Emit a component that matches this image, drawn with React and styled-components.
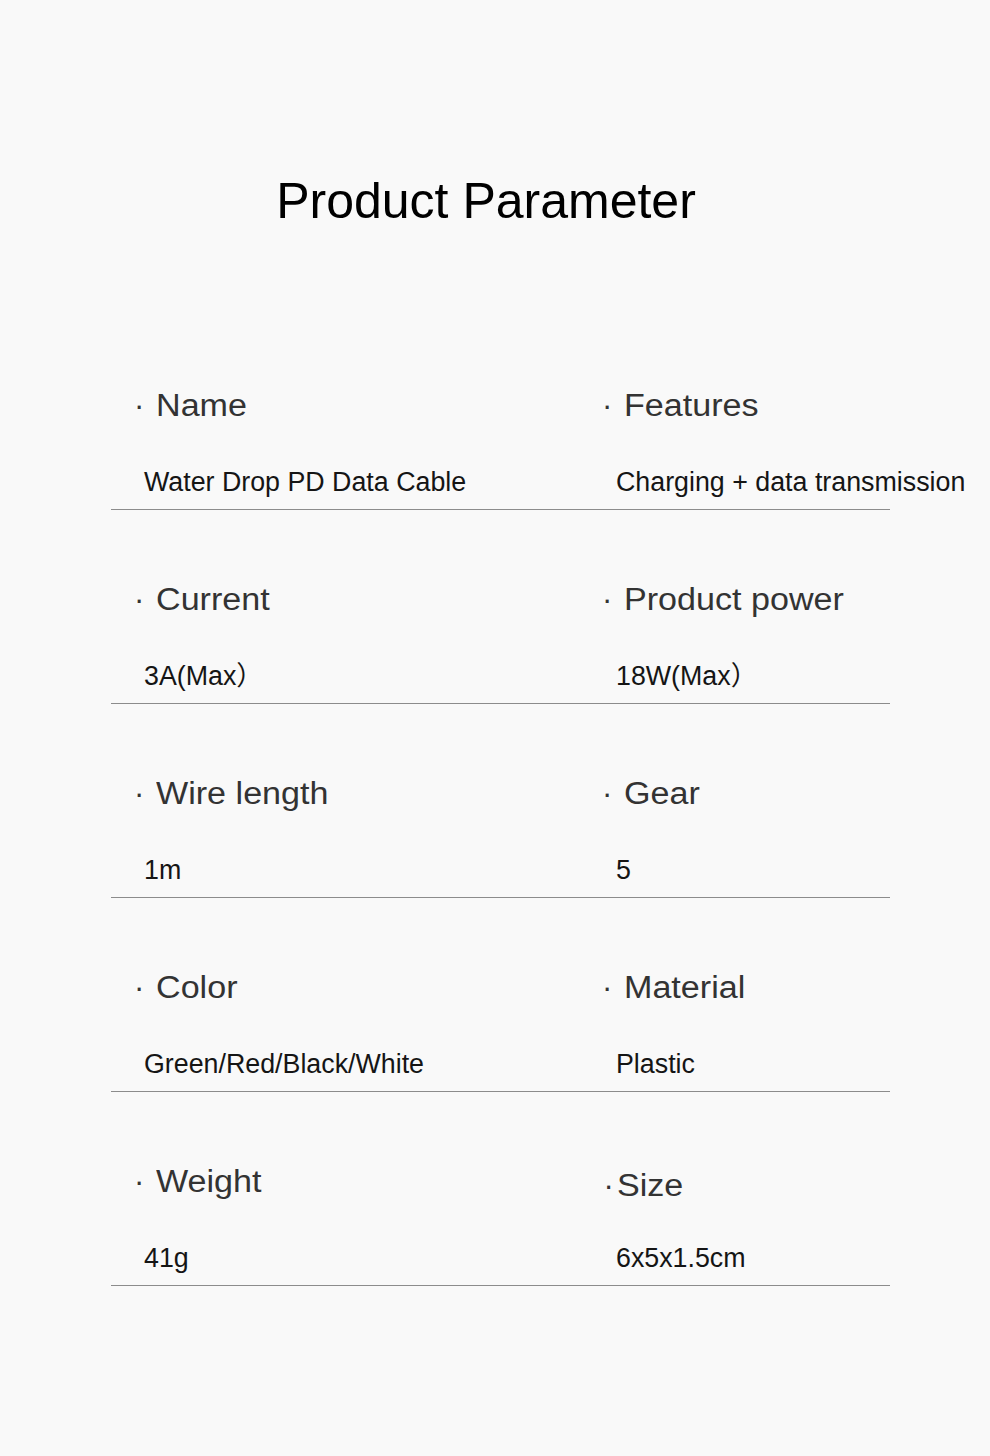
import React from 'react';
import styled, { createGlobalStyle } from 'styled-components';

const GlobalStyle = createGlobalStyle`
  html, body {
    margin: 0;
    padding: 0;
    background: #f9f9f9;
  }
  body {
    font-family: "Liberation Sans", Arial, "Noto Sans CJK SC", sans-serif;
  }
`;

const Page = styled.div`
  width: 990px;
  min-height: 1456px;
  box-sizing: border-box;
  padding-top: 176px;
  background: #f9f9f9;
`;

const Title = styled.h1`
  margin: 0;
  padding-right: 18px;
  text-align: center;
  font-size: 50px;
  line-height: 1;
  font-weight: 400;
  color: #000;
`;

const Table = styled.div`
  margin: 90.3px 0 0 111px;
  width: 779px;
  display: flex;
  flex-direction: column;
`;

const Row = styled.div`
  display: grid;
  grid-template-columns: 491px 1fr;
  margin-top: 73.3px;
  padding-bottom: 13.6px;
  border-bottom: 1px solid #8c8c8c;
`;

const Cell = styled.div`
  display: flex;
  flex-direction: column;
  gap: 48.3px;
  padding-left: ${(p) => (p.right ? 0 : 23)}px;
  white-space: nowrap;
`;

const Label = styled.div`
  display: flex;
  font-size: 31px;
  line-height: 1;
  color: #333;
  transform: translateY(${(p) => p.shift || 0}px);
`;

const Dot = styled.span`
  display: inline-block;
  width: ${(p) => p.width}px;
  margin-left: ${(p) => p.offset || 0}px;
`;

const LabelText = styled.span`
  display: inline-block;
  transform: scaleX(1.1);
  transform-origin: left center;
`;

const Value = styled.div`
  margin-left: ${(p) => (p.right ? 14 : 10)}px;
  font-size: 26.8px;
  line-height: 1;
  color: #151515;
`;

const rows = [
  [
    { label: 'Name', value: 'Water Drop PD Data Cable' },
    { label: 'Features', value: 'Charging + data transmission' },
  ],
  [
    { label: 'Current', value: '3A(Max）' },
    { label: 'Product power', value: '18W(Max）' },
  ],
  [
    { label: 'Wire length', value: '1m' },
    { label: 'Gear', value: '5' },
  ],
  [
    { label: 'Color', value: 'Green/Red/Black/White' },
    { label: 'Material', value: 'Plastic' },
  ],
  [
    { label: 'Weight', value: '41g' },
    { label: 'Size', value: '6x5x1.5cm', tight: true },
  ],
];

const Param = ({ item, right }) => (
  <Cell right={right}>
    <Label shift={item.tight ? 4 : 0}>
      <Dot width={item.tight ? 13 : 21.5} offset={item.tight ? 1.5 : 0}>·</Dot>
      <LabelText>{item.label}</LabelText>
    </Label>
    <Value right={right}>{item.value}</Value>
  </Cell>
);

export default function App() {
  return (
    <>
      <GlobalStyle />
      <Page>
        <Title>Product Parameter</Title>
        <Table>
          {rows.map(([a, b]) => (
            <Row key={a.label}>
              <Param item={a} />
              <Param item={b} right />
            </Row>
          ))}
        </Table>
      </Page>
    </>
  );
}
